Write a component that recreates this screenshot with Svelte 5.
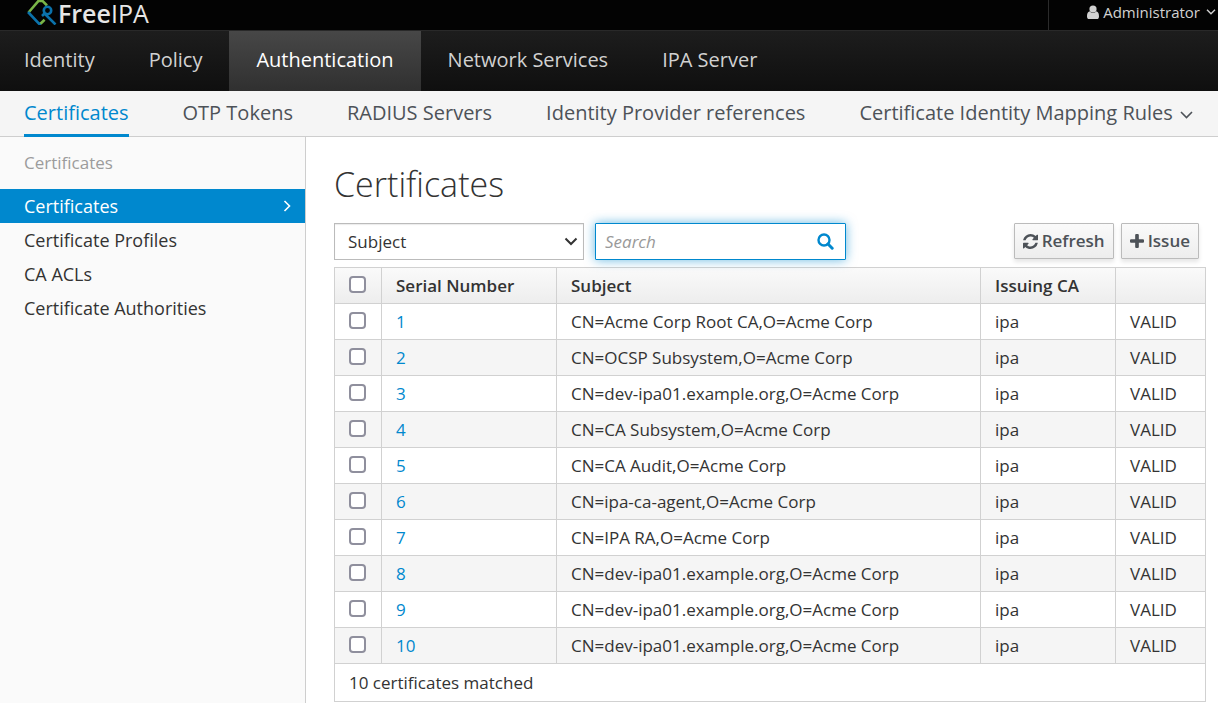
<script>
  const mainNav = ['Identity', 'Policy', 'Authentication', 'Network Services', 'IPA Server'];
  const tabs = [
    { label: 'Certificates' },
    { label: 'OTP Tokens' },
    { label: 'RADIUS Servers' },
    { label: 'Identity Provider references' },
    { label: 'Certificate Identity Mapping Rules', dropdown: true }
  ];
  const sideNav = ['Certificates', 'Certificate Profiles', 'CA ACLs', 'Certificate Authorities'];

  let activeNav = $state('Authentication');
  let activeTab = $state('Certificates');
  let activeSide = $state('Certificates');

  let certificates = [
    { serial: 1, subject: 'CN=Acme Corp Root CA,O=Acme Corp' },
    { serial: 2, subject: 'CN=OCSP Subsystem,O=Acme Corp' },
    { serial: 3, subject: 'CN=dev-ipa01.example.org,O=Acme Corp' },
    { serial: 4, subject: 'CN=CA Subsystem,O=Acme Corp' },
    { serial: 5, subject: 'CN=CA Audit,O=Acme Corp' },
    { serial: 6, subject: 'CN=ipa-ca-agent,O=Acme Corp' },
    { serial: 7, subject: 'CN=IPA RA,O=Acme Corp' },
    { serial: 8, subject: 'CN=dev-ipa01.example.org,O=Acme Corp' },
    { serial: 9, subject: 'CN=dev-ipa01.example.org,O=Acme Corp' },
    { serial: 10, subject: 'CN=dev-ipa01.example.org,O=Acme Corp' }
  ].map((cert) => ({ ...cert, ca: 'ipa', status: 'VALID' }));

  let selected = $state([]);
  let filter = $state('Subject');
  let search = $state('');

  function toggleAll(event) {
    selected = event.target.checked ? certificates.map((c) => c.serial) : [];
  }

  function go(event, set) {
    event.preventDefault();
    set();
  }
</script>

<div class="app">
  <header class="topbar">
    <a class="brand" href="#home" aria-label="FreeIPA">
      <svg width="31" height="25" viewBox="0 0 31 25" fill="none" stroke-width="2.6" aria-hidden="true">
        <path d="M1.500 12.500 L11.500 .9 H15.500 L20 5.500" stroke="#7ab648" />
        <path d="M1 12 L12 23.600 H14" stroke="#0b72ab" />
        <path d="M13.500 23.700 L17.600 19.800" stroke="#7ab648" />
        <circle cx="20.500" cy="10.500" r="3.700" stroke="#0b72ab" />
        <path d="M18 13 L15 16 M18 14 L28.500 24.500" stroke="#0b72ab" />
      </svg>
      <span class="brand-name"><b>Free</b>IPA</span>
    </a>
    <button class="user">
      <svg width="12" height="14" viewBox="0 0 12 14" fill="currentColor" aria-hidden="true">
        <circle cx="6" cy="4" r="3.6" />
        <path d="M2.6 6.2 A4.4 4.4 0 0 0 9.4 6.2 C11.3 6.8 12 8.6 12 11.4 C12 13 11.2 14 9.8 14 H2.2 C.8 14 0 13 0 11.4 C0 8.6 .7 6.8 2.6 6.2 Z" />
      </svg>
      <span>Administrator</span>
      <svg class="caret" width="10" height="6" viewBox="0 0 10 6" fill="none" stroke="currentColor" stroke-width="1.4" aria-hidden="true">
        <path d="M1 .8 L5 4.8 L9 .8" />
      </svg>
    </button>
  </header>

  <nav class="main-nav" aria-label="Main">
    {#each mainNav as item}
      <a href="#{item}" class:active={item === activeNav} onclick={(e) => go(e, () => (activeNav = item))}>{item}</a>
    {/each}
  </nav>

  <nav class="tabs" aria-label="Authentication">
    {#each tabs as tab}
      <a href="#{tab.label}" class:active={tab.label === activeTab} onclick={(e) => go(e, () => (activeTab = tab.label))}>
        {tab.label}
        {#if tab.dropdown}
          <svg width="13" height="8" viewBox="0 0 13 8" fill="none" stroke="currentColor" stroke-width="1.6" aria-hidden="true">
            <path d="M1 1 L6.5 6.5 L12 1" />
          </svg>
        {/if}
      </a>
    {/each}
  </nav>

  <div class="body">
    <aside class="sidebar">
      <h2>Certificates</h2>
      <nav aria-label="Certificates">
        {#each sideNav as item}
          <a href="#{item}" class:active={item === activeSide} onclick={(e) => go(e, () => (activeSide = item))}>
            {item}
            {#if item === activeSide}
              <svg width="8" height="12" viewBox="0 0 8 12" fill="none" stroke="currentColor" stroke-width="1.6" aria-hidden="true">
                <path d="M1.5 1 L6.5 6 L1.5 11" />
              </svg>
            {/if}
          </a>
        {/each}
      </nav>
    </aside>

    <main>
      <h1>Certificates</h1>

      <div class="toolbar">
        <div class="select-box">
          <select bind:value={filter} aria-label="Search by">
            <option>Subject</option>
            <option>Serial Number</option>
            <option>Issuing CA</option>
          </select>
          <svg width="14" height="9" viewBox="0 0 14 9" fill="none" stroke="currentColor" stroke-width="2" aria-hidden="true">
            <path d="M1.5 1.5 L7 7 L12.5 1.5" />
          </svg>
        </div>
        <div class="search-box">
          <input type="text" placeholder="Search" aria-label="Search" bind:value={search} />
          <button class="search-btn" aria-label="Run search">
            <svg width="17" height="17" viewBox="0 0 17 17" fill="none" stroke="currentColor" stroke-width="2.4" aria-hidden="true">
              <circle cx="7" cy="7" r="5.5" />
              <path d="M11 11 L15.2 15.2" stroke-width="3" stroke-linecap="round" />
            </svg>
          </button>
        </div>

        <div class="actions">
          <button class="btn">
            <svg width="15" height="15" viewBox="0 0 1536 1536" fill="currentColor" aria-hidden="true">
              <path d="M1511 928q0 5-1 7-64 268-268 434.500T764 1536q-146 0-282.500-55T238 1324l-129 129q-19 19-45 19t-45-19-19-45V960q0-26 19-45t45-19h448q26 0 45 19t19 45-19 45l-137 137q71 66 161 102t187 36q134 0 250-65t186-179q11-17 53-117 8-23 30-23h192q13 0 22.500 9.500t9.500 22.500zM1536 128v448q0 26-19 45t-45 19h-448q-26 0-45-19t-19-45 19-45l138-138Q969 256 768 256q-134 0-250 65T332 500q-11 17-53 117-8 23-30 23H50q-13 0-22.500-9.500T18 608v-7q65-268 270-434.500T768 0q146 0 284 55.500T1297 212l130-129q19-19 45-19t45 19 19 45z" />
            </svg>
            Refresh
          </button>
          <button class="btn">
            <svg width="14" height="14" viewBox="0 0 13 13" fill="currentColor" aria-hidden="true">
              <path d="M5.8 0 H7.2 Q8.200 0 8.200 1 V4.800 H12 Q13 4.800 13 5.800 V7.200 Q13 8.200 12 8.200 H8.200 V12 Q8.200 13 7.200 13 H5.800 Q4.800 13 4.800 12 V8.200 H1 Q0 8.200 0 7.200 V5.800 Q0 4.800 1 4.800 H4.800 V1 Q4.800 0 5.800 0 Z" />
            </svg>
            Issue
          </button>
        </div>
      </div>

      <table>
        <colgroup>
          <col class="col-check" />
          <col class="col-serial" />
          <col />
          <col class="col-ca" />
          <col class="col-status" />
        </colgroup>
        <thead>
          <tr>
            <th>
              <input type="checkbox" aria-label="Select all" checked={selected.length === certificates.length} onchange={toggleAll} />
            </th>
            <th>Serial Number</th>
            <th>Subject</th>
            <th>Issuing CA</th>
            <th></th>
          </tr>
        </thead>
        <tbody>
          {#each certificates as cert (cert.serial)}
            <tr>
              <td>
                <input type="checkbox" aria-label="Select certificate {cert.serial}" value={cert.serial} bind:group={selected} />
              </td>
              <td><a href="#cert-{cert.serial}">{cert.serial}</a></td>
              <td>{cert.subject}</td>
              <td>{cert.ca}</td>
              <td>{cert.status}</td>
            </tr>
          {/each}
        </tbody>
        <tfoot>
          <tr>
            <td colspan="5">{certificates.length} certificates matched</td>
          </tr>
        </tfoot>
      </table>
    </main>
  </div>
</div>

<style>
  :global(body) {
    margin: 0;
    background: #fff;
  }

  .app {
    display: flex;
    flex-direction: column;
    min-height: 100vh;
    font-family: 'Open Sans', 'Noto Sans', sans-serif;
    font-size: 17px;
    line-height: 24px;
    color: #333;
  }

  .app,
  .app * {
    box-sizing: border-box;
  }

  a {
    color: #0088ce;
    text-decoration: none;
  }

  button {
    font: inherit;
    cursor: pointer;
  }

  svg {
    flex: none;
  }

  .topbar {
    display: flex;
    justify-content: space-between;
    height: 30px;
    background: #030303;
  }

  .brand {
    display: flex;
    align-items: center;
    padding: 0 0 5px 27px;
    color: #e6e6e6;
  }

  .brand-name {
    font-size: 25px;
  }

  .brand-name b {
    font-weight: 600;
  }

  .user {
    display: flex;
    align-items: center;
    gap: 4px;
    padding: 0 2px 6px 38px;
    border: 0;
    border-left: 1px solid #2b2b2b;
    background: none;
    color: #d1d1d1;
    font-size: 15px;
  }

  .caret {
    margin-left: 2px;
  }

  .main-nav {
    display: flex;
    border-top: 1px solid #292929;
    background: linear-gradient(#1d1d1d, #0f0f0f);
    font-size: 20px;
    white-space: nowrap;
  }

  .main-nav a {
    padding: 17px 27px 19px;
    color: #d1d1d1;
  }

  .main-nav a:first-child {
    padding-left: 24px;
  }

  .main-nav a.active {
    background: linear-gradient(#474747, #303030);
    color: #fff;
  }

  .tabs {
    display: flex;
    gap: 54px;
    padding: 0 24px;
    border-bottom: 1px solid #cecece;
    background: #f5f5f5;
    font-size: 20px;
    white-space: nowrap;
  }

  .tabs a {
    display: flex;
    align-items: center;
    gap: 7px;
    margin-bottom: -1px;
    padding: 10px 0 9px;
    border-bottom: 3px solid transparent;
    color: #4d5258;
  }

  .tabs svg {
    margin-top: 4px;
  }

  .tabs a.active {
    border-color: #0088ce;
    color: #0088ce;
  }

  .body {
    display: flex;
    flex: 1;
  }

  .sidebar {
    flex: none;
    width: 306px;
    border-right: 1px solid #cecece;
    background: #fafafa;
  }

  .sidebar h2 {
    margin: 0;
    padding: 14px 24px;
    color: #9c9c9c;
    font-size: 17px;
    font-weight: 400;
  }

  .sidebar a {
    display: flex;
    align-items: center;
    justify-content: space-between;
    padding: 5px 14px 5px 24px;
    color: #333;
    font-size: 18px;
  }

  .sidebar a.active {
    background: #0088ce;
    color: #fff;
  }

  main {
    flex: 1;
    min-width: 0;
    padding: 23px 12px 0 28px;
  }

  h1 {
    margin: 0 0 15px;
    font-size: 34px;
    font-weight: 300;
    line-height: 48px;
  }

  .toolbar {
    display: flex;
    gap: 11px;
    padding-right: 7px;
    margin-bottom: 7px;
  }

  .select-box,
  .search-box {
    display: flex;
    align-items: center;
    width: 250px;
    height: 37px;
    border: 1px solid #bbb;
    background: #fff;
  }

  .select-box {
    position: relative;
    box-shadow: inset 0 1px 1px rgba(0, 0, 0, 0.08);
  }

  .select-box select {
    width: 100%;
    height: 100%;
    padding: 0 13px;
    border: 0;
    background: transparent;
    color: #333;
    font: inherit;
    appearance: none;
  }

  .select-box svg {
    position: absolute;
    right: 5px;
    pointer-events: none;
  }

  .search-box {
    width: 251px;
    border-color: #0088ce;
    border-radius: 1px;
    box-shadow: 0 0 11px rgba(0, 136, 206, 0.6);
  }

  .search-box input {
    flex: 1;
    min-width: 0;
    height: 100%;
    padding: 0 9px;
    border: 0;
    outline: 0;
    background: transparent;
    font: inherit;
  }

  .search-box input::placeholder {
    color: #999;
    font-style: italic;
    opacity: 1;
  }

  .search-btn {
    display: flex;
    padding: 0 11px 0 0;
    border: 0;
    background: none;
    color: #0088ce;
  }

  .actions {
    display: flex;
    gap: 7px;
    margin-left: auto;
  }

  .btn {
    display: flex;
    align-items: center;
    gap: 4px;
    height: 36px;
    padding: 0 8px;
    border: 1px solid #bbb;
    border-radius: 1px;
    background: linear-gradient(#fafafa, #ededed);
    box-shadow: 0 3px 4px rgba(3, 3, 3, 0.1);
    color: #4d5258;
    font-weight: 600;
  }

  table {
    width: 100%;
    border-collapse: collapse;
    table-layout: fixed;
  }

  .col-check {
    width: 47px;
  }

  .col-serial {
    width: 175px;
  }

  .col-ca {
    width: 135px;
  }

  .col-status {
    width: 90px;
  }

  thead {
    background: linear-gradient(#fafafa, #ededed);
  }

  th,
  td {
    height: 36px;
    padding: 0 14px;
    border: 1px solid #d1d1d1;
    text-align: left;
  }

  th {
    font-weight: 600;
  }

  tbody tr:nth-child(even) {
    background: #f5f5f5;
  }

  tfoot td {
    height: 38px;
  }

  input[type='checkbox'] {
    display: block;
    width: 17px;
    height: 17px;
    margin: 0 0 2px;
    border: 2px solid #8f8f9d;
    border-radius: 4px;
    background: #fff;
    appearance: none;
  }

  input[type='checkbox']:checked {
    border-color: #0088ce;
    background: #0088ce;
  }
</style>
